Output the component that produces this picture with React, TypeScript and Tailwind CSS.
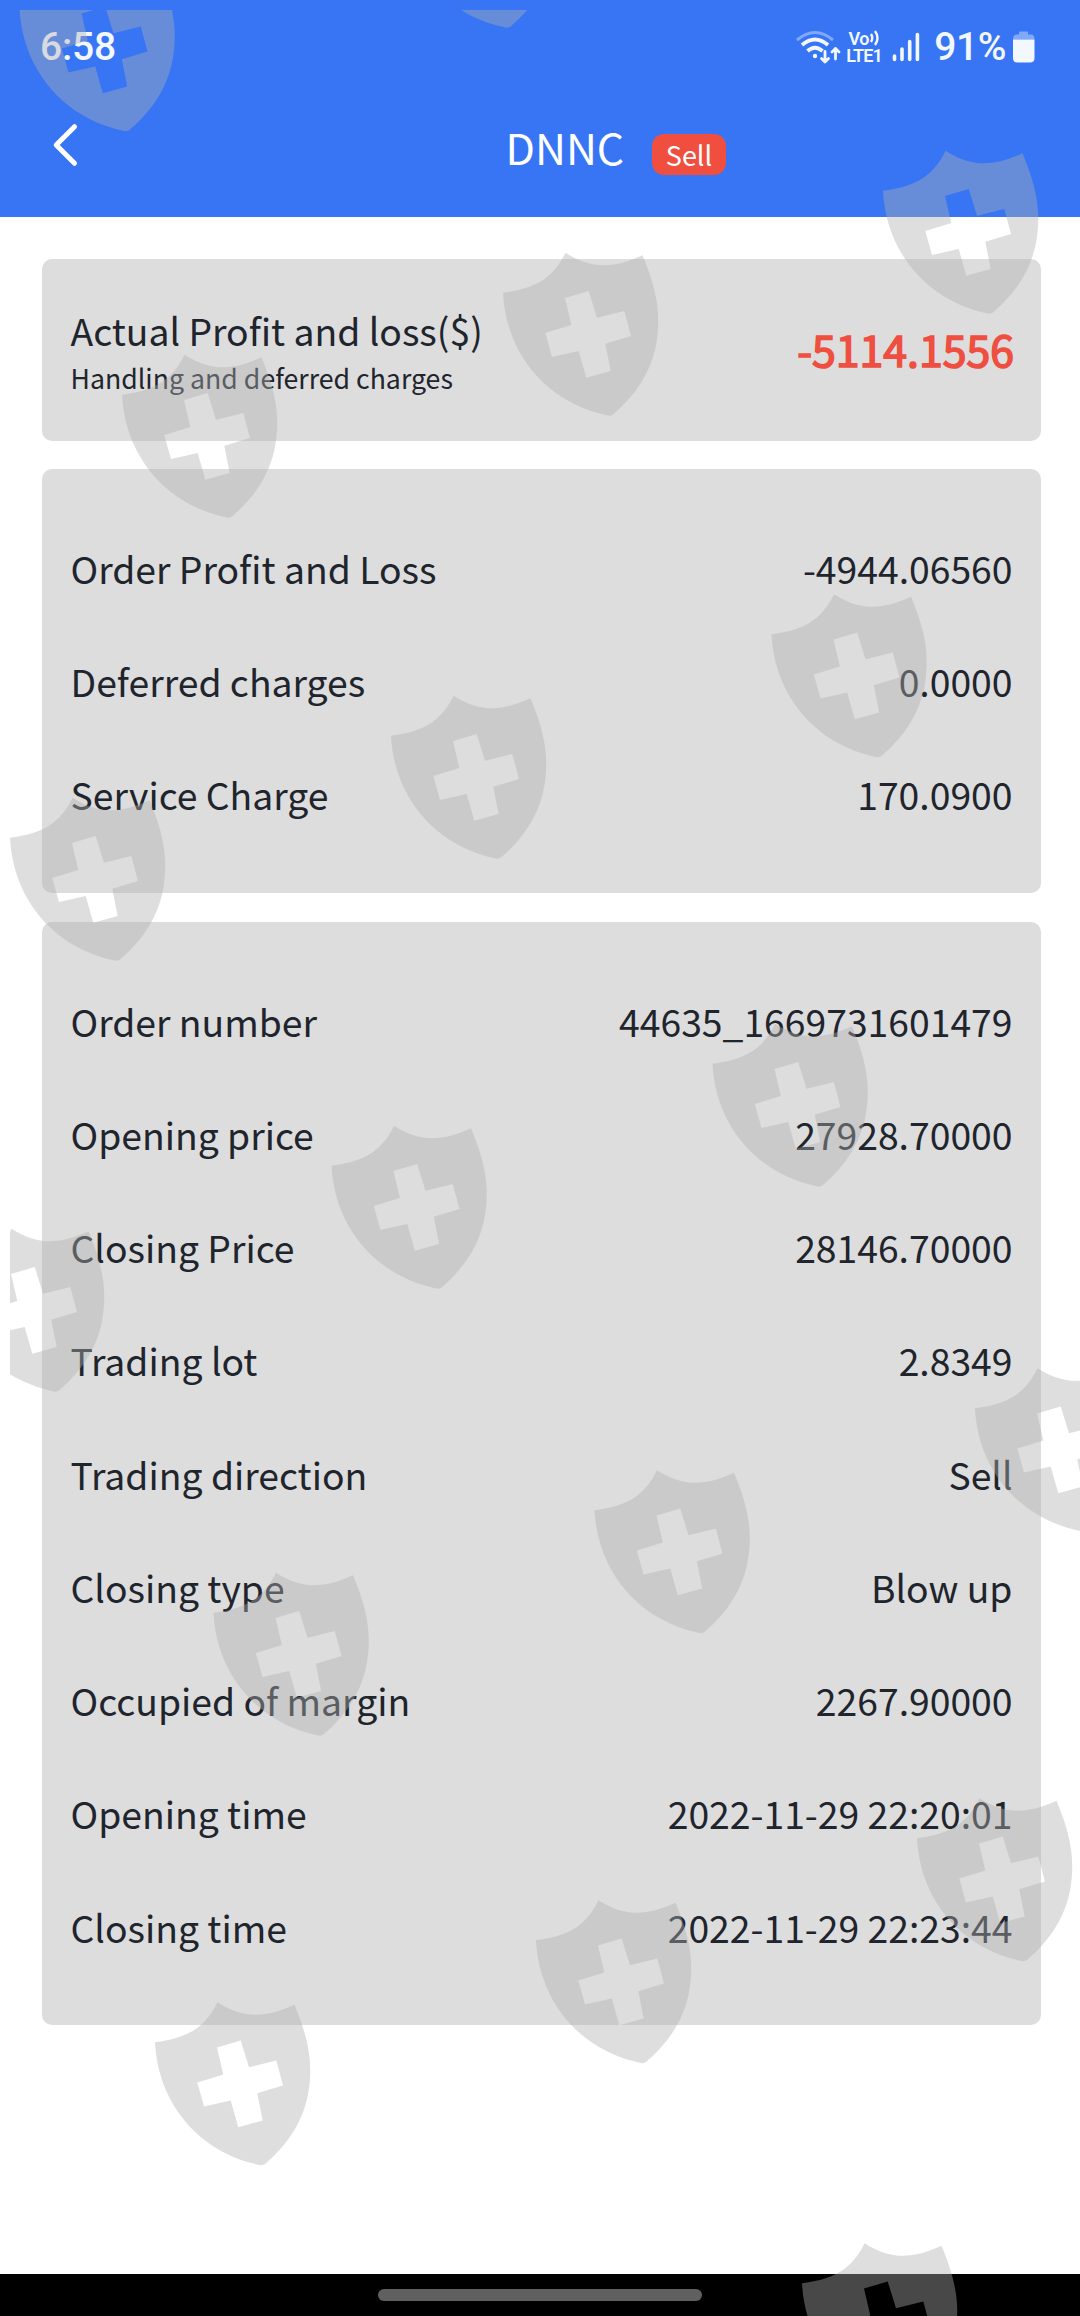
const FEES = [
  { label: "Order Profit and Loss", value: "-4944.06560" },
  { label: "Deferred charges", value: "0.0000" },
  { label: "Service Charge", value: "170.0900" },
];

const ORDER = [
  { label: "Order number", value: "44635_1669731601479" },
  { label: "Opening price", value: "27928.70000" },
  { label: "Closing Price", value: "28146.70000" },
  { label: "Trading lot", value: "2.8349" },
  { label: "Trading direction", value: "Sell" },
  { label: "Closing type", value: "Blow up" },
  { label: "Occupied of margin", value: "2267.90000" },
  { label: "Opening time", value: "2022-11-29 22:20:01" },
  { label: "Closing time", value: "2022-11-29 22:23:44" },
];

// top-left corner of every shield in the overlay
const SHIELDS = [
  [19.5, -32.5], [400.5, -136], [883, 150], [503, 252], [122, 354],
  [771.5, 593.5], [391, 695], [10, 797], [712.5, 1023], [331.5, 1125],
  [-51, 1228], [975, 1367.5], [594.5, 1469.5], [213.5, 1572],
  [917, 1797.5], [536, 1899.5], [155, 2001.5], [802, 2242.5],
];

const SHIELD_PATH =
  "M0 40.7C38 36 52 22 62.5 .7C88 17 110 17 139.5 3.3C154 38 158 62 153.5 90C149 118 134 142 110 162.5Q108 164 105 163.5C44 151 3 102 0 40.7Z" +
  "M85.7 39L94 65.7L121.3 59L128 84L102.3 91.7L107.7 119L83.3 125.7L75.7 99L49 105L42.3 81L68.3 73L62 46Z";

function Watermark() {
  return (
    <svg
      className="pointer-events-none absolute inset-0"
      width="1080"
      height="2316"
      viewBox="0 0 1080 2316"
    >
      <defs>
        <clipPath id="inset">
          <rect x="10" y="10" width="1070" height="2306" />
        </clipPath>
      </defs>
      <g clipPath="url(#inset)" fill="#afafaf" fillOpacity="0.41" fillRule="evenodd">
        {SHIELDS.map(([x, y]) => (
          <path key={`${x},${y}`} d={SHIELD_PATH} transform={`translate(${x} ${y})`} />
        ))}
      </g>
    </svg>
  );
}

function StatusBar() {
  return (
    <div className="flex h-[92px] items-center justify-between pl-[40px] pr-[45px] pt-[2px] font-['Roboto',sans-serif] font-medium text-[#f3f8ff]">
      <span className="text-[39px] leading-none tracking-[-0.2px]">6:58</span>
      <div className="flex items-center">
        {/* Wifi with traffic arrows */}
        <svg width="46" height="36" viewBox="0 0 46 36" fill="none" stroke="currentColor" strokeLinecap="round">
          <path d="M2 11Q20 -4 38 11" strokeWidth="3" opacity="0.4" strokeLinecap="butt" />
          <path d="M7 16Q20 5 33 16" strokeWidth="3.8" strokeLinecap="butt" />
          <path d="M12.5 22Q20 15.5 27.5 22" strokeWidth="3.8" strokeLinecap="butt" />
          <circle cx="20" cy="27" r="2.2" fill="currentColor" stroke="none" />
          <path d="M30 22.5V33M26.5 29.5L30 33L33.5 29.5M40.5 30V19.5M37 23L40.5 19.5L44 23" strokeWidth="2.8" strokeLinejoin="round" />
        </svg>
        <div className="ml-[4px] flex w-[38px] flex-col items-center text-[18px] font-semibold leading-[17.5px]">
          <span className="flex items-center tracking-[-0.7px]">
            Vo
            <svg width="11" height="16" viewBox="0 0 11 16" fill="none" stroke="currentColor" strokeWidth="2.4">
              <path d="M2 4Q4.5 8 2 12M6 1Q11 8 6 15" />
            </svg>
          </span>
          <span className="tracking-[-0.8px]">LTE1</span>
        </div>
        <svg className="ml-[9px]" width="28" height="30" viewBox="0 0 28 30" stroke="currentColor" strokeWidth="3.6" strokeLinecap="round">
          <path d="M2.5 24V27.5M10 17V27.5M17.7 9.5V27.5M25.4 2.5V27.5" />
        </svg>
        <span className="ml-[14px] text-[39px] leading-none tracking-[-0.4px]">91%</span>
        <svg className="ml-[7px]" width="22" height="32" viewBox="0 0 22 32" fill="currentColor">
          <path d="M6 3.5V1.5Q6 .5 7 .5H14Q15 .5 15 1.5V3.5H18Q21.5 3.5 21.5 8.5H0Q0 3.5 4 3.5Z" opacity="0.4" />
          <path d="M0 8.5H21.5V27Q21.5 31.5 17 31.5H4.5Q0 31.5 0 27Z" />
        </svg>
      </div>
    </div>
  );
}

function DetailCard({ rows }: { rows: { label: string; value: string }[] }) {
  return (
    <section className="rounded-[10px] bg-[#dddddd] px-[28.5px] pb-[41px] pt-[43px]">
      {rows.map((row) => (
        <div key={row.label} className="flex h-[113.25px] items-center justify-between text-[37.3px]">
          <span>{row.label}</span>
          <span>{row.value}</span>
        </div>
      ))}
    </section>
  );
}

export default function App() {
  return (
    <div className="relative flex h-[2316px] w-[1080px] flex-col overflow-hidden bg-white font-['Noto_Sans_CJK_SC',sans-serif] text-[#20242c]">
      <header className="h-[217px] bg-[#3775f5] text-white">
        <StatusBar />
        <div className="flex h-[125px] items-start">
          <svg className="ml-[52px] mt-[30px]" width="28" height="46" viewBox="0 0 28 46" fill="none" stroke="currentColor" strokeWidth="5" strokeLinecap="round" strokeLinejoin="round">
            <path d="M22.5 4.7L4.2 23L22.5 41.3" />
          </svg>
          <h1 className="ml-[425.5px] mt-[22px] w-[119px] text-[42.8px] leading-[64px]">DNNC</h1>
          <span className="ml-[27.5px] mt-[42px] flex h-[41px] w-[74px] items-center justify-center rounded-[12px] bg-[#f04e3e] text-[27px] leading-none">
            Sell
          </span>
        </div>
      </header>

      <main className="flex flex-1 flex-col gap-[28.8px] pl-[42px] pr-[39px] pt-[42px]">
        <section className="flex h-[181.5px] items-center justify-between rounded-[10px] bg-[#dddddd] pl-[28.5px] pr-[27px]">
          <div className="pt-[4px]">
            <p className="text-[37.3px] leading-[50px]">Actual Profit and loss($)</p>
            <p className="pt-[3px] text-[26.7px] leading-[40px]">Handling and deferred charges</p>
          </div>
          <span className="pb-[3px] text-[42.8px] text-[#ef4f40] [-webkit-text-stroke:1.6px_#ef4f40]">-5114.1556</span>
        </section>
        <DetailCard rows={FEES} />
        <DetailCard rows={ORDER} />
      </main>

      {/* System navigation bar */}
      <footer className="flex h-[42px] items-center justify-center bg-black">
        <div className="h-[12px] w-[324px] rounded-full bg-[#606060]" />
      </footer>

      <Watermark />
    </div>
  );
}
